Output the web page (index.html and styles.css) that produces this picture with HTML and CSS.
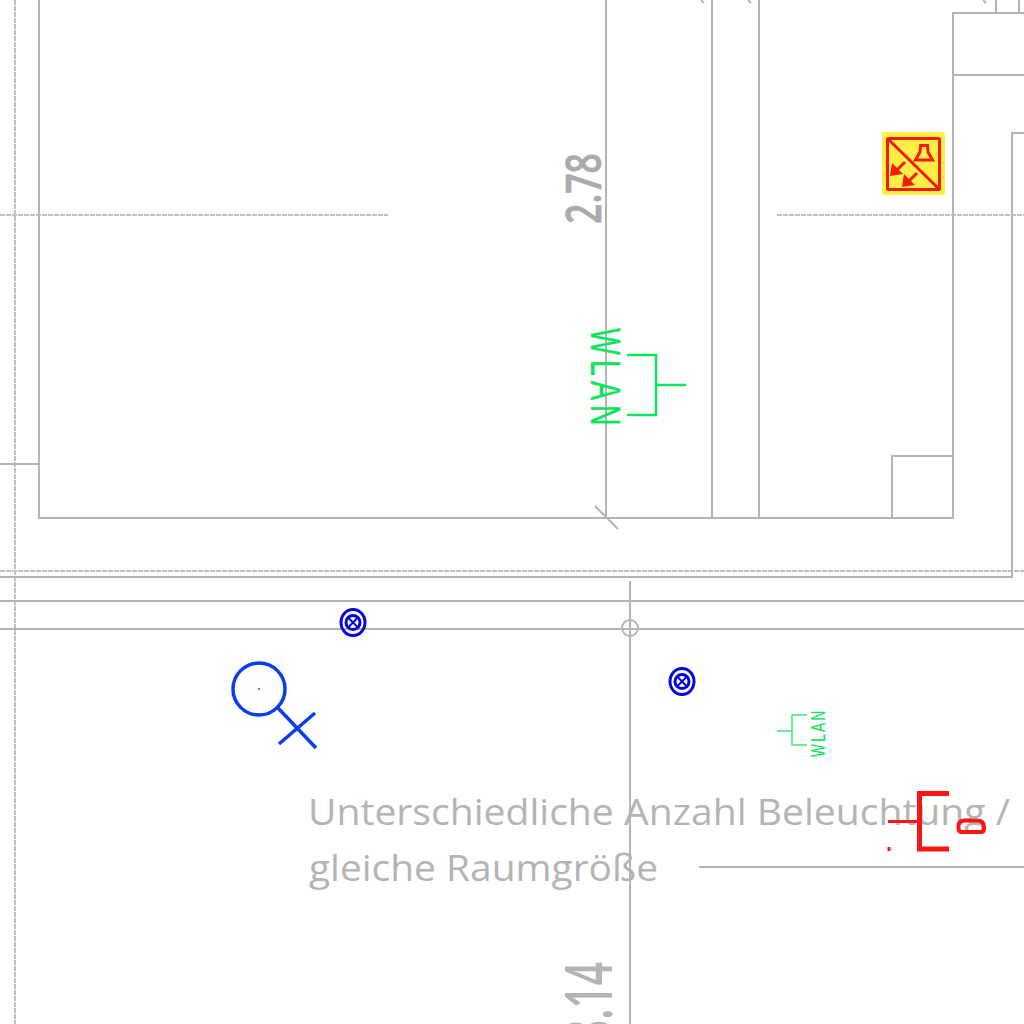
FILE: index.html
```html
<!DOCTYPE html>
<html lang="en">
<head>
    <meta charset="UTF-8">
    <title>Grundriss Beleuchtung</title>
    <link rel="stylesheet" href="styles.css">
</head>
<body>
    <svg class="plan" width="1024" height="1024" viewBox="0 0 1024 1024">
        <!-- Dashed axis lines -->
        <g class="axis">
            <path d="M15 0V1024"/>
            <path d="M0 571H1024"/>
            <path d="M0 215H388"/>
            <path d="M777 215H1024"/>
        </g>

        <!-- Walls -->
        <g class="wall">
            <path d="M39 0V518H953V13H1024"/>
            <path d="M606 0V518"/>
            <path d="M712 0V518"/>
            <path d="M759 0V518"/>
            <path d="M953 75H1024"/>
            <path d="M892 518V456H953"/>
            <path d="M1024 133H1012V577H0"/>
            <path d="M996 0V13"/>
            <path d="M1019 0V13"/>
            <path d="M0 464H39"/>
            <path d="M0 601H1024"/>
            <path d="M0 629H1024"/>
            <path d="M630 581V1024"/>
            <path d="M699 867H1024"/>
        </g>
        <g class="tick">
            <path d="M595 506L618 529"/>
            <path d="M701 0L704 3"/>
            <path d="M748 0L751 3"/>
            <path d="M983 0L986 3"/>
            <circle cx="630" cy="628" r="8"/>
        </g>

        <!-- Measurements and labels -->
        <text class="dim dim-bold" transform="translate(601 224) rotate(-90)" textLength="71" lengthAdjust="spacingAndGlyphs">2.78</text>
        <text class="dim dim-large" transform="translate(612 1043) rotate(-90)" textLength="81" lengthAdjust="spacingAndGlyphs">3.14</text>
        <text class="note" x="308" y="825" textLength="702" lengthAdjust="spacingAndGlyphs">Unterschiedliche Anzahl Beleuchtung /</text>
        <text class="note" x="309" y="881" textLength="349" lengthAdjust="spacingAndGlyphs">gleiche Raumgröße</text>

        <!-- Emergency light sign -->
        <rect class="sign-bg" x="882" y="132" width="63" height="63" rx="2"/>
        <g class="sign">
            <rect x="887.500" y="138.500" width="52" height="51" rx="1"/>
            <path d="M887 138L940 190"/>
            <path d="M920.500 145.500H927.500L928 152L932.500 160H915.500L920 152Z"/>
            <path d="M905 162L896 171"/>
            <path d="M917 173L908 182"/>
            <path class="fill" d="M890 176L892 163L903 174Z"/>
            <path class="fill" d="M902 187L904 174L915 185Z"/>
        </g>

        <!-- Lamps and switch -->
        <g class="lamp">
            <ellipse cx="353" cy="622.500" rx="12" ry="13"/>
            <circle cx="353" cy="622.500" r="7"/>
            <path class="cross" d="M348 617.500L358 627.500M358 617.500L348 627.500"/>
            <ellipse cx="682" cy="681.500" rx="12" ry="13"/>
            <circle cx="682" cy="681.500" r="7"/>
            <path class="cross" d="M677 676.500L687 686.500M687 676.500L677 686.500"/>
        </g>
        <g class="switch">
            <circle cx="259" cy="689" r="26"/>
            <path d="M278 708L316 748"/>
            <path d="M279 744L315 713"/>
        </g>
        <circle class="switch-dot" cx="259" cy="689" r="1"/>

        <!-- WLAN access points -->
        <g class="wlan">
            <path d="M627 355H656V415H627"/>
            <path d="M656 385H686"/>
        </g>
        <text class="wlan-text" transform="translate(591 328) rotate(90) scale(.68 1)">WLAN</text>
        <g class="wlan wlan-small">
            <path d="M807 715H792V745H807"/>
            <path d="M777 731H792"/>
        </g>
        <text class="wlan-text wlan-text-small" transform="translate(825 757) rotate(-90) scale(.68 1)">WLAN</text>

        <!-- Red socket -->
        <g class="socket">
            <path class="heavy" d="M949 793.500H919.500V849H949"/>
            <path d="M888 821.500H918"/>
            <path class="mid" d="M962 832Q958.500 832 958.500 828V826Q958.500 820.500 965 820.500H977Q984 820.500 984 827V829Q984 832 981 832Z"/>
            <path d="M889 847V851"/>
        </g>
    </svg>
</body>
</html>
```

FILE: styles.css
```css
/* General Styling */
html, body {
    margin: 0;
    padding: 0;
    background-color: #fff;
}

.plan {
    display: block;
}

/* Plan lines */
.wall path {
    fill: none;
    stroke: #b4b4b4;
    stroke-width: 2;
}

.axis path {
    fill: none;
    stroke: #c0c0c0;
    stroke-width: 2;
    stroke-dasharray: 5 1;
}

.tick path,
.tick circle {
    fill: none;
    stroke: #b4b4b4;
    stroke-width: 2;
}

/* Text */
.dim,
.note {
    fill: #b4b4b4;
    font-family: "Open Sans", sans-serif;
}

.dim-bold {
    font-size: 49px;
    font-weight: 600;
    fill: #aaa;
    stroke: #aaa;
    stroke-width: 0.600;
}

.dim-large {
    font-size: 66px;
    font-weight: 600;
}

.note {
    font-size: 36px;
}

/* Emergency sign */
.sign-bg {
    fill: #ffee44;
}

.sign rect,
.sign path {
    fill: none;
    stroke: #f51a10;
    stroke-width: 3;
}

.sign .fill {
    fill: #f51a10;
    stroke: none;
}

/* Blue symbols */
.lamp ellipse,
.lamp circle {
    fill: none;
    stroke: #0505dc;
    stroke-width: 3;
}

.lamp .cross {
    fill: none;
    stroke: #0505dc;
    stroke-width: 2;
}

.switch circle,
.switch path {
    fill: none;
    stroke: #0a3cf0;
    stroke-width: 3.500;
}

.switch-dot {
    fill: #3a55c0;
}

/* WLAN */
.wlan path {
    fill: none;
    stroke: #0ae65a;
    stroke-width: 2.500;
}

.wlan-text {
    fill: #0ae65a;
    stroke: #0ae65a;
    stroke-width: 0.400;
    font-family: "Liberation Sans", sans-serif;
    font-size: 42px;
    letter-spacing: 7.400px;
}

.wlan-text-small {
    font-size: 20px;
    stroke-width: 0.100;
    letter-spacing: 3.400px;
}

.wlan-small path {
    stroke: #3ce678;
    stroke-width: 1.500;
}

/* Socket */
.socket path {
    fill: none;
    stroke: #fa1414;
    stroke-width: 3;
}

.socket .heavy {
    stroke-width: 5;
}

.socket .mid {
    stroke-width: 4;
}
```
